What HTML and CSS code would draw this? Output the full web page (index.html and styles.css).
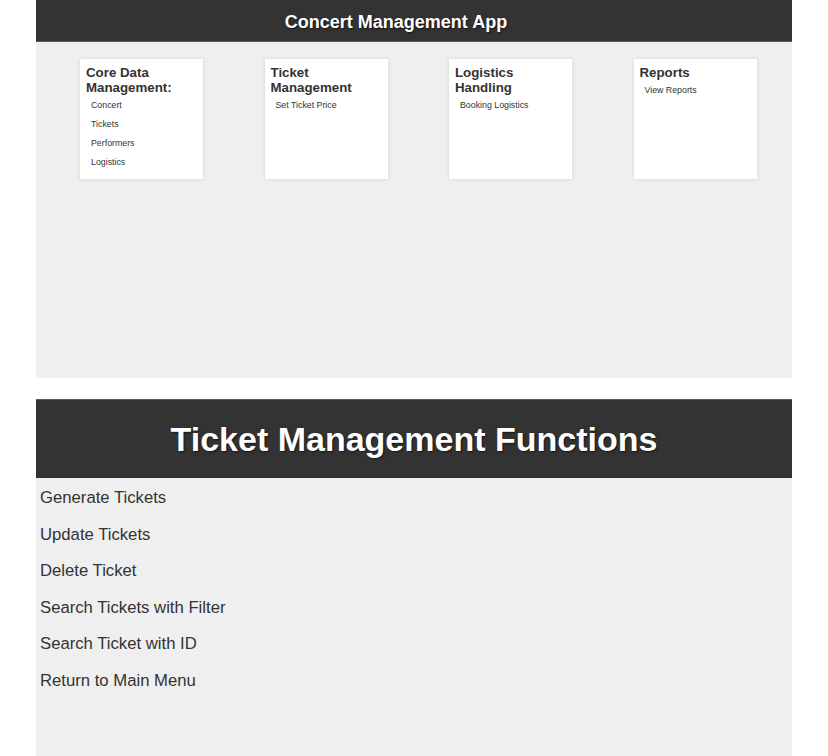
FILE: index.html
```html
<!DOCTYPE html>
<html lang="en">
<head>
    <meta charset="UTF-8">
    <meta name="viewport" content="width=device-width, initial-scale=1.0">
    <title>Concert Management App</title>
    <link rel="stylesheet" href="styles.css">
</head>
<body>

    <div class="panel main-menu">
        <header class="app-header">
            <h1>Concert Management App</h1>
        </header>

        <div class="menu-area">
            <div class="menu-card">
                <h5>Core Data Management:</h5>
                <a class="menu-link" href="#">Concert</a>
                <a class="menu-link" href="#">Tickets</a>
                <a class="menu-link" href="#">Performers</a>
                <a class="menu-link" href="#">Logistics</a>
            </div>

            <div class="menu-card">
                <h5>Ticket Management</h5>
                <a class="menu-link" href="#">Set Ticket Price</a>
            </div>

            <div class="menu-card">
                <h5>Logistics Handling</h5>
                <a class="menu-link" href="#">Booking Logistics</a>
            </div>

            <div class="menu-card">
                <h5>Reports</h5>
                <a class="menu-link" href="#">View Reports</a>
            </div>
        </div>
    </div>

    <div class="panel functions">
        <header class="section-header">
            <h1>Ticket Management Functions</h1>
        </header>

        <ul class="function-list">
            <li><a href="#">Generate Tickets</a></li>
            <li><a href="#">Update Tickets</a></li>
            <li><a href="#">Delete Ticket</a></li>
            <li><a href="#">Search Tickets with Filter</a></li>
            <li><a href="#">Search Ticket with ID</a></li>
            <li><a href="#">Return to Main Menu</a></li>
        </ul>
    </div>

</body>
</html>
```

FILE: styles.css
```css
/* General Styles */
body {
    font-family: 'Liberation Sans', Arial, sans-serif;
    margin: 0;
    background: white;
    color: #333;
}
.panel {
    width: 756px;
    margin: 0 auto;
}
a {
    color: #333;
    text-decoration: none;
}

/* Top Header */
.app-header {
    background: #333;
    height: 42px;
    padding: 3px 36px 0 0;
    border-bottom: 1px solid #5a5a5a;
    box-sizing: border-box;
    display: flex;
    align-items: center;
    justify-content: center;
}
.app-header h1 {
    margin: 0;
    color: white;
    font-size: 18px;
    text-shadow: 1px 1px 2px rgba(0, 0, 0, 0.6);
}

/* Menu Cards */
.menu-area {
    background: #efefef;
    height: 336px;
    box-sizing: border-box;
    padding: 17px 0 0 44px;
    display: flex;
    align-items: flex-start;
    gap: 61.5px;
}
.menu-card {
    width: 123px;
    height: 120px;
    box-sizing: border-box;
    background: white;
    padding: 5.5px 6px;
    box-shadow: 0px 0px 4px rgba(0, 0, 0, 0.12);
}
.menu-card h5 {
    margin: 0 0 1px;
    font-size: 13.3px;
    line-height: 15.3px;
    color: #333;
}
.menu-link {
    display: block;
    padding-left: 5px;
    font-size: 8.8px;
    line-height: 19px;
}

/* Functions Section */
.functions {
    margin-top: 21px;
}
.section-header {
    background: #333;
    height: 79px;
    border-top: 1px solid #5a5a5a;
    box-sizing: border-box;
    display: flex;
    align-items: center;
    justify-content: center;
}
.section-header h1 {
    margin: 0;
    color: white;
    font-size: 34px;
    text-shadow: 1px 1px 2px rgba(0, 0, 0, 0.6);
}
.function-list {
    list-style: none;
    margin: 0;
    padding: 2px 0 60px 4px;
    background: #efefef;
}
.function-list li {
    font-size: 16.7px;
    line-height: 36.6px;
}
```
